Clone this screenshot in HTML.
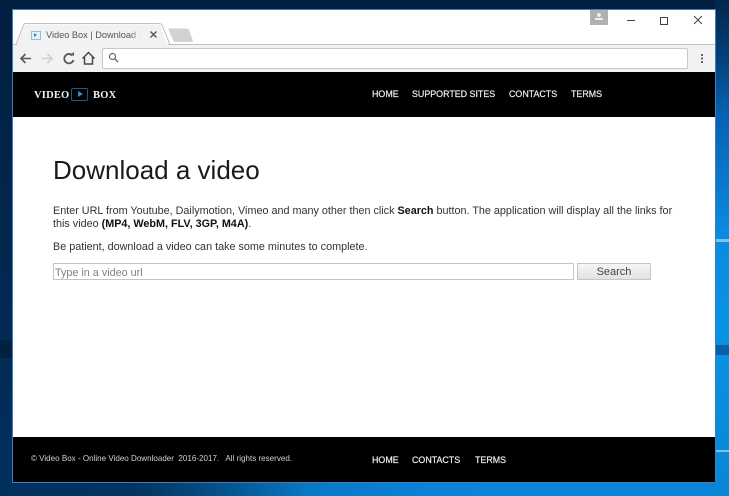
<!DOCTYPE html>
<html><head><meta charset="utf-8"><style>
html,body{margin:0;padding:0}
body{width:729px;height:496px;overflow:hidden;position:relative;font-family:"Liberation Sans",sans-serif;background:#02294f}
.a{position:absolute;white-space:nowrap}
#w{position:absolute;left:0;top:0;width:729px;height:496px;filter:blur(.3px)}
.n{font-size:8.9px;line-height:12px;color:#eee;-webkit-text-stroke:.2px #eee}
</style></head><body><div id="w">
<!-- desktop -->
<div class="a" style="left:0;top:0;width:729px;height:496px;background:linear-gradient(180deg,#021f40 0,#02305f 100%)"></div>
<div class="a" style="left:715px;top:0;width:14px;height:496px;background:linear-gradient(180deg,#03264e 0,#04417c 60px,#0660b0 110px,#0a8ae0 230px,#0893e4 330px,#0a86d6 496px)"></div>
<div class="a" style="left:715px;top:345px;width:14px;height:10px;background:#0a5ea8"></div>
<div class="a" style="left:715px;top:239px;width:14px;height:3px;background:#7cc4ee"></div>
<div class="a" style="left:715px;top:450px;width:14px;height:2px;background:#7cc4ee"></div>
<div class="a" style="left:0;top:483px;width:729px;height:13px;background:linear-gradient(90deg,#02305c 0,#023561 140px,#04568f 230px,#0a78c8 310px,#0d83d8 450px,#0a86d8 729px)"></div>
<div class="a" style="left:0;top:340px;width:12px;height:18px;background:#02203f"></div>
<!-- window -->
<div class="a" style="left:12px;top:9px;width:704px;height:474px;background:#3f7fb5"></div>
<div class="a" style="left:13px;top:10px;width:702px;height:472px;background:#fff"></div>
<!-- tab strip -->
<div class="a" style="left:13px;top:44px;width:702px;height:1px;background:#c4c4c4"></div>
<svg class="a" style="left:13px;top:20px" width="190" height="26" viewBox="0 0 190 26">
<path d="M0 24.500H3L11 4Q12 3.500 13 3.500H146Q148 3.500 149 5L157 24.500H190" fill="none" stroke="#c0c0c0"/>
<path d="M3.500 25L11.500 4.500H146.500L155 25Z" fill="#f2f2f2"/>
<path d="M155 8.500H174Q175 8.500 176 10L180 21Q180 22 178.500 22H161Z" fill="#d2d2d2"/>
</svg>
<div class="a" style="left:31px;top:31px;width:8px;height:7px;background:#e6f2fa;border:1px solid #8fc0dd"></div>
<div class="a" style="left:34px;top:33px;width:0;height:0;border-left:3px solid #2c8cc8;border-top:2px solid transparent;border-bottom:2px solid transparent"></div>
<div class="a" style="left:46px;top:29px;width:94px;overflow:hidden;font-size:9.200px;line-height:12px;color:#555">Video Box | Download a video</div>
<div class="a" style="left:131px;top:28px;width:10px;height:14px;background:linear-gradient(90deg,rgba(242,242,242,0),#f2f2f2)"></div>
<svg class="a" style="left:149px;top:30px" width="9" height="9"><path d="M1.500 1.500L7.500 7.500M7.500 1.500L1.500 7.500" stroke="#555" stroke-width="1.400"/></svg>
<!-- toolbar -->
<div class="a" style="left:13px;top:45px;width:702px;height:27px;background:#f2f2f2"></div>
<svg class="a" style="left:13px;top:45px" width="90" height="27" fill="none">
<path d="M8 13.500H18M12.500 9L8 13.500L12.500 18" stroke="#5a5a5a" stroke-width="1.600"/>
<path d="M29 13.500H39M34.500 9L39 13.500L34.500 18" stroke="#cfcfcf" stroke-width="1.600"/>
<path d="M59.500 10.500A4.700 4.700 0 1 0 60.500 15" stroke="#5a5a5a" stroke-width="1.800"/>
<path d="M56.500 10.500H61V7Z" fill="#5a5a5a"/>
<path d="M69.500 13.500L75.500 7.500L81.500 13.500M71.500 12V19H79.500V12" stroke="#4a4a4a" stroke-width="1.500"/>
</svg>
<div class="a" style="left:102px;top:48px;width:584px;height:19px;background:#fff;border:1px solid #c8c8c8;border-radius:2px"></div>
<svg class="a" style="left:108px;top:52px" width="11" height="11" fill="none"><circle cx="4.500" cy="4.500" r="3" stroke="#666" stroke-width="1.200"/><path d="M6.800 6.800L10 10" stroke="#666" stroke-width="1.400"/></svg>
<div class="a" style="left:701px;top:54px;width:2px;height:2px;background:#666;box-shadow:0 3.500px 0 #666,0 7px 0 #666"></div>
<!-- window controls -->
<div class="a" style="left:590px;top:10px;width:18px;height:15px;background:#b0b0b0"></div>
<div class="a" style="left:597px;top:13px;width:4px;height:4px;background:#eee;border-radius:2px"></div>
<div class="a" style="left:595px;top:18px;width:8px;height:2px;background:#eee"></div>
<div class="a" style="left:627px;top:20px;width:8px;height:1px;background:#444"></div>
<div class="a" style="left:660px;top:17px;width:6px;height:6px;border:1px solid #444"></div>
<svg class="a" style="left:693px;top:15px" width="10" height="10"><path d="M1 1L9 9M9 1L1 9" stroke="#444" stroke-width="1"/></svg>
<!-- header -->
<div class="a" style="left:13px;top:72px;width:702px;height:45px;background:#000"></div>
<div class="a" style="left:34px;top:89px;font:bold 10.500px/14px 'Liberation Serif',serif;color:#f2f2f2;letter-spacing:.2px">VIDEO</div>
<div class="a" style="left:71px;top:88px;width:15px;height:11px;border:1px solid #1d5a86;border-radius:2px"></div>
<div class="a" style="left:78px;top:91px;width:0;height:0;border-left:5px solid #2a8fd0;border-top:3.500px solid transparent;border-bottom:3.500px solid transparent"></div>
<div class="a" style="left:93px;top:89px;font:bold 10.500px/14px 'Liberation Serif',serif;color:#f2f2f2;letter-spacing:.2px">BOX</div>
<div class="a n" style="left:372px;top:88px">HOME</div>
<div class="a n" style="left:412px;top:88px">SUPPORTED SITES</div>
<div class="a n" style="left:509px;top:88px">CONTACTS</div>
<div class="a n" style="left:571px;top:88px">TERMS</div>
<!-- content -->
<div class="a" style="left:53px;top:155px;font-size:26px;line-height:30px;color:#1a1a1a">Download a video</div>
<div class="a" style="left:53px;top:204px;font-size:10.800px;line-height:13px;color:#333;margin-top:1px">Enter URL from Youtube, Dailymotion, Vimeo and many other then click <b style="color:#111">Search</b> button. The application will display all the links for<br>this video <b style="color:#111">(MP4, WebM, FLV, 3GP, M4A)</b>.</div>
<div class="a" style="left:53px;top:241px;font-size:10.800px;line-height:13px;color:#333">Be patient, download a video can take some minutes to complete.</div>
<div class="a" style="left:53px;top:263px;width:519px;height:15px;border:1px solid #c4c4c4;background:#fff"></div>
<div class="a" style="left:55px;top:266px;font-size:10.800px;line-height:14px;color:#808080">Type in a video url</div>
<div class="a" style="left:577px;top:263px;width:72px;height:15px;border:1px solid #c6c6c6;background:linear-gradient(180deg,#f6f6f6,#e2e2e2);font-size:11px;line-height:17px;text-align:center;color:#444">Search</div>
<!-- footer -->
<div class="a" style="left:13px;top:437px;width:702px;height:45px;background:#000"></div>
<div class="a" style="left:31px;top:453px;font-size:8.050px;line-height:12px;color:#d0d0d0;white-space:pre">© Video Box - Online Video Downloader  2016-2017.   All rights reserved.</div>
<div class="a n" style="left:372px;top:454px">HOME</div>
<div class="a n" style="left:412px;top:454px">CONTACTS</div>
<div class="a n" style="left:475px;top:454px">TERMS</div>
</div></body></html>
